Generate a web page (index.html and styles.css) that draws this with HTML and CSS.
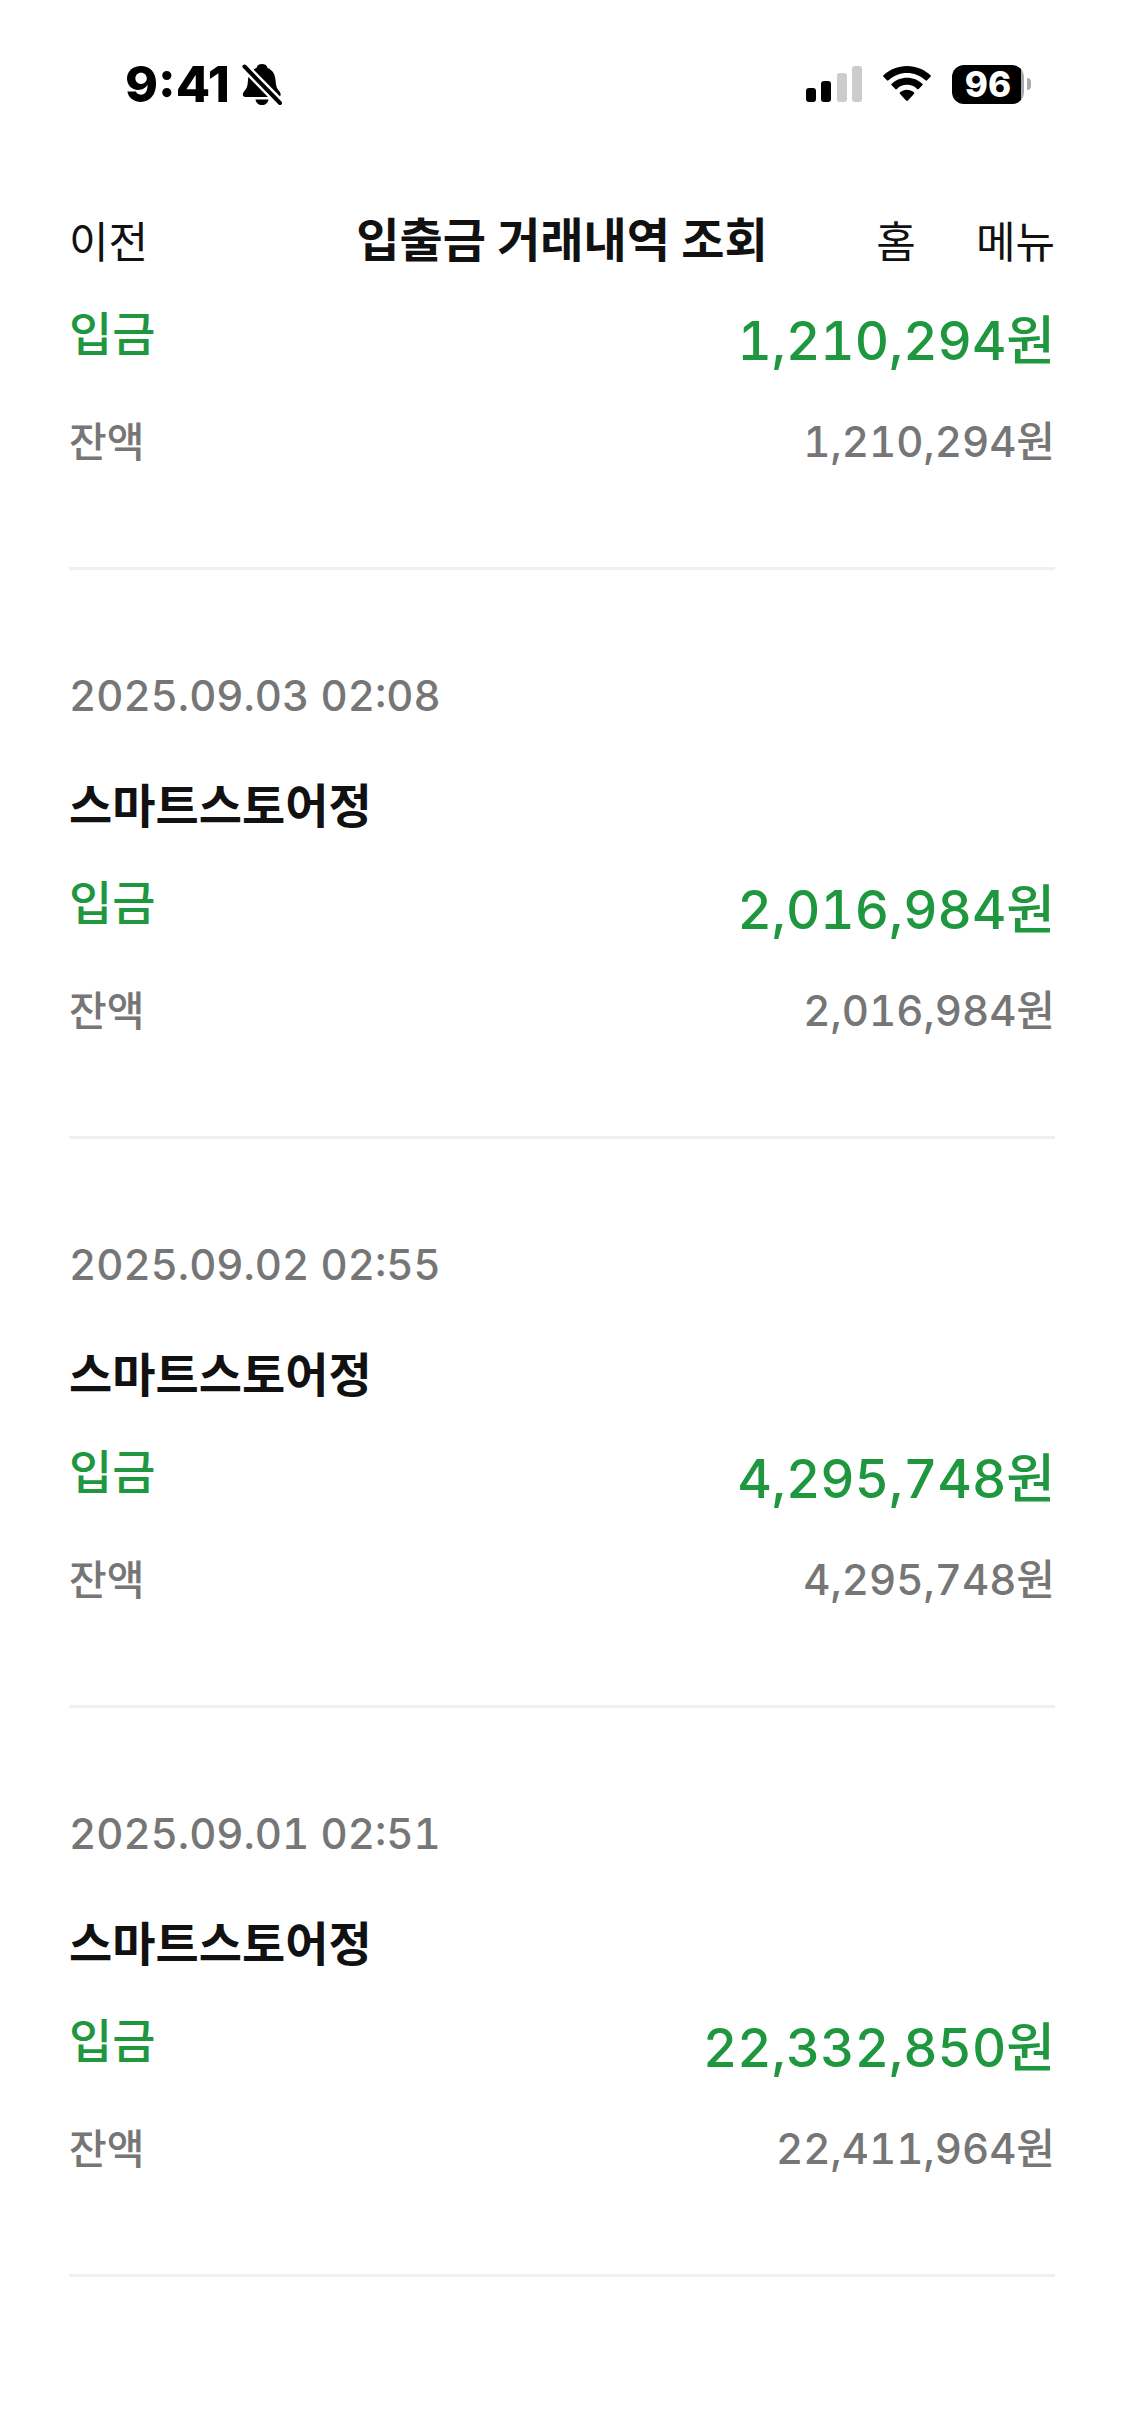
FILE: index.html
```html
<!DOCTYPE html>
<html lang="ko">
<head>
    <meta charset="UTF-8">
    <title>입출금 거래내역 조회</title>
    <meta name="viewport" content="width=device-width, initial-scale=1.0">
    <link rel="stylesheet" href="styles.css">
</head>
<body>
    <div class="status-bar">
        <div class="status-left">
            <span class="clock">9:41</span>
            <svg class="bell" viewBox="0 0 40 44" width="40" height="44" aria-hidden="true">
                <path d="M20 2c-3 0-5 1.500-5.500 4C9 8 6.500 12 6 18c-.5 7-1 8-4 11.500C0 32 .5 35 3.500 35h32C39 35 39.500 32 37.500 29.500 34.500 26 34 24 33.500 18 33 12 30.500 8 25.500 6 25 3.500 23 2 20 2z"/>
                <path d="M13.500 37.500h13C26 41 23.500 43 20 43s-6-2-6.500-5.500z"/>
                <path class="bell-gap" d="M-2 0L41 44"/>
                <path class="bell-slash" d="M2.500 4.500L38 41"/>
            </svg>
        </div>
        <div class="status-right">
            <svg width="56" height="36" viewBox="0 0 56 36" aria-hidden="true">
                <rect x="0" y="22" width="10" height="14" rx="3"/>
                <rect x="15" y="15" width="10" height="21" rx="3"/>
                <rect class="bar-off" x="31" y="7" width="10" height="29" rx="3"/>
                <rect class="bar-off" x="46" y="0" width="10" height="36" rx="3"/>
            </svg>
            <svg class="wifi" width="48" height="36" viewBox="0 0 48 36" aria-hidden="true">
                <path d="M24 0C15 0 6.500 3.500.500 9.300q-.7.7 0 1.500l3.400 3.500q.8.8 1.600 0C10.500 9.700 17 7 24 7s13.500 2.700 18.500 7.300q.8.800 1.600 0l3.400-3.500q.7-.8 0-1.500C41.500 3.500 33 0 24 0z"/>
                <path d="M24 11.700c-6 0-11.300 2.300-15.300 6-.6.600-.6 1 0 1.600l3.600 3.600q.8.700 1.600 0C16.600 20.300 20 18.800 24 18.800s7.400 1.500 10.100 4.100q.8.700 1.600 0l3.600-3.600c.6-.6.600-1 0-1.600-4-3.700-9.300-6-15.300-6z"/>
                <path d="M24 23.700c-2.700 0-5 .9-6.900 2.500-.6.600-.6 1.100 0 1.700l6 6.700q.9.900 1.800 0l6-6.700c.6-.6.600-1.100 0-1.700-1.900-1.600-4.200-2.500-6.900-2.500z"/>
            </svg>
            <div class="battery">
                <span class="battery-body">96</span>
                <span class="battery-cap"></span>
            </div>
        </div>
    </div>

    <header class="header">
        <button class="nav-btn" type="button">이전</button>
        <h1>입출금 거래내역 조회</h1>
        <nav class="header-right">
            <button class="nav-btn" type="button">홈</button>
            <button class="nav-btn" type="button">메뉴</button>
        </nav>
    </header>

    <main class="list">
        <section class="item item-first">
            <div class="row deposit"><span class="label">입금</span><span class="amount">1,210,294원</span></div>
            <div class="row balance"><span class="label">잔액</span><span class="amount">1,210,294원</span></div>
        </section>
        <section class="item">
            <time class="date">2025.09.03 02:08</time>
            <h2>스마트스토어정</h2>
            <div class="row deposit"><span class="label">입금</span><span class="amount">2,016,984원</span></div>
            <div class="row balance"><span class="label">잔액</span><span class="amount">2,016,984원</span></div>
        </section>
        <section class="item">
            <time class="date">2025.09.02 02:55</time>
            <h2>스마트스토어정</h2>
            <div class="row deposit"><span class="label">입금</span><span class="amount">4,295,748원</span></div>
            <div class="row balance"><span class="label">잔액</span><span class="amount">4,295,748원</span></div>
        </section>
        <section class="item">
            <time class="date">2025.09.01 02:51</time>
            <h2>스마트스토어정</h2>
            <div class="row deposit"><span class="label">입금</span><span class="amount">22,332,850원</span></div>
            <div class="row balance"><span class="label">잔액</span><span class="amount">22,411,964원</span></div>
        </section>
    </main>
</body>
</html>
```

FILE: styles.css
```css
* { box-sizing: border-box; }
body { margin: 0; background: #fff; color: #111; font-family: Inter, "Noto Sans CJK KR", sans-serif; }
h1, h2 { margin: 0; font-weight: 700; }

.status-bar { display: flex; justify-content: space-between; align-items: center; height: 168px; padding: 0 93px 0 125px; color: #000; }
.status-left { display: flex; align-items: center; gap: 12px; }
.clock { font-size: 50px; line-height: 60px; font-weight: 800; }
.bell-gap { fill: none; stroke: #fff; stroke-width: 9; }
.bell-slash { fill: none; stroke: #000; stroke-width: 4; stroke-linecap: round; }
.status-right { display: flex; align-items: center; gap: 21px; }
.bar-off { fill: #ccc; }
.battery { display: flex; align-items: center; gap: 3px; }
.battery-body { width: 72px; height: 39px; border-radius: 12px; background: linear-gradient(to right, #000 69px, #aaa 69px); color: #fff; font-size: 35px; line-height: 39px; font-weight: 800; text-align: center; }
.battery-cap { width: 4px; height: 12px; border-radius: 0 4px 4px 0; background: #aaa; }

.header { display: grid; grid-template-columns: 1fr auto 1fr; align-items: start; padding: 36px 69px 17px; }
.header h1 { font-size: 47px; line-height: 72px; }
.header-right { display: flex; justify-content: flex-end; gap: 60px; }
.nav-btn { justify-self: start; padding: 0; border: none; background: none; color: #111; font-family: inherit; font-size: 43px; line-height: 76px; cursor: pointer; }

.list { padding: 0 69px; }
.item { padding: 96px 0 95px; border-bottom: 3px solid #f0f0f0; }
.item-first { padding-top: 0; }
.date { display: block; color: #767676; font-size: 42px; line-height: 60px; font-weight: 500; font-variant-numeric: tabular-nums; }
.item h2 { margin-top: 44px; font-size: 47px; line-height: 72px; }
.row { display: flex; justify-content: space-between; font-weight: 500; }
.amount { font-variant-numeric: tabular-nums; }
.deposit { margin-top: 24px; color: #1e973f; }
.deposit .label { font-size: 47px; line-height: 74px; }
.deposit .amount { font-size: 53px; line-height: 88px; }
.item-first .deposit { margin-top: 0; }
.balance { margin-top: 27px; color: #767676; line-height: 60px; }
.balance .label { font-size: 41px; }
.balance .amount { font-size: 42px; }
```
